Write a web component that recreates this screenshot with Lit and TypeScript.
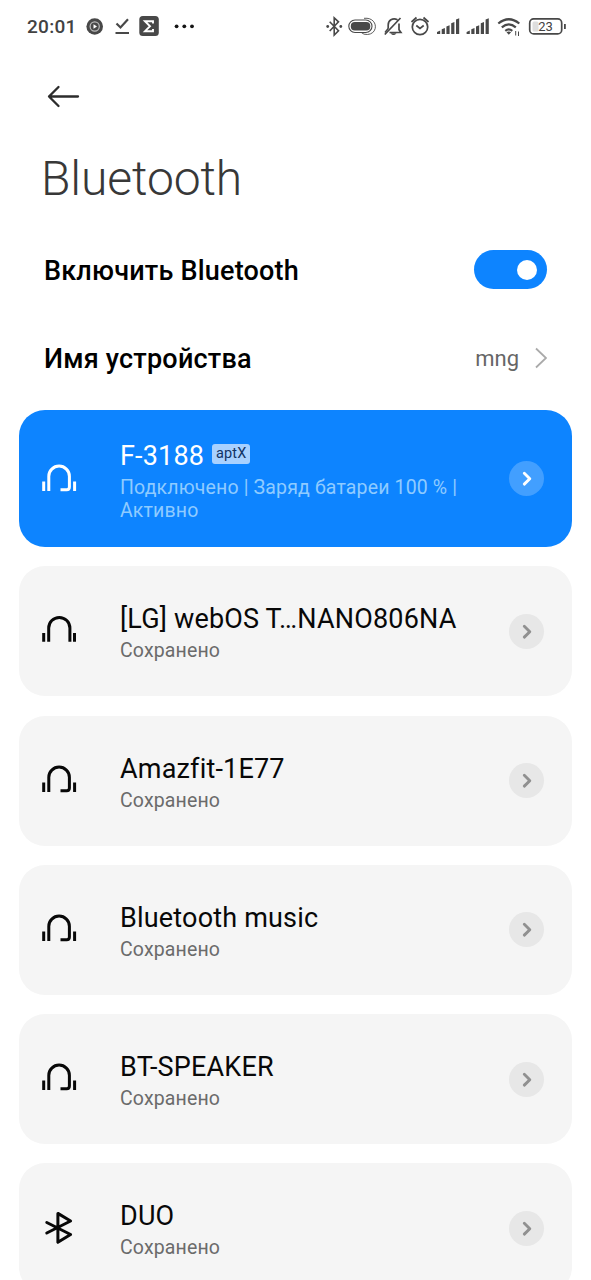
import { LitElement, html, css, svg } from 'lit';
import { customElement, property } from 'lit/decorators.js';
import { classMap } from 'lit/directives/class-map.js';

type Kind = 'headset' | 'headphones' | 'bluetooth';
interface Device { name: string; status: string; kind: Kind; codec?: string; active?: boolean; }

const devices: Device[] = [
  { name: 'F-3188', status: 'Подключено | Заряд батареи 100 % | Активно', kind: 'headset', codec: 'aptX', active: true },
  { name: '[LG] webOS T…NANO806NA', status: 'Сохранено', kind: 'headphones' },
  { name: 'Amazfit-1E77', status: 'Сохранено', kind: 'headset' },
  { name: 'Bluetooth music', status: 'Сохранено', kind: 'headset' },
  { name: 'BT-SPEAKER', status: 'Сохранено', kind: 'headset' },
  { name: 'DUO', status: 'Сохранено', kind: 'bluetooth' },
];

const glyphs = {
  headset: svg`<path d="M1.700 15.500v9.500M32.600 15.500v9.500M6.800 25V10.200a10.300 10.100 0 0 1 20.600 0V21q0 2.700-2.700 2.700H18.500"/>`,
  headphones: svg`<path d="M1.700 16v8.700M32.500 16v8.700M6.700 24.700V11a10.600 10.600 0 0 1 21.200 0V24.700"/>`,
  bluetooth: svg`<path stroke-linejoin="round" stroke-linecap="round" d="M4.800 8.500L28.600 20.500L15.900 28.300V-.6L28.600 7L4.800 19"/>`,
};

@customElement('status-bar')
class StatusBar extends LitElement {
  static styles = css`
    :host { display: flex; height: 53px; box-sizing: border-box; padding-left: 27px; align-items: center; color: #424242; }
    .time { font: 500 19px/24px Roboto, sans-serif; letter-spacing: .3px; width: 58px; padding-top: 1px; }
    svg { display: block; fill: none; stroke: #484848; overflow: visible; }
    .fill { fill: #484848; stroke: none; }
    .num { font: 400 13px Roboto, sans-serif; fill: #424242; stroke: none; }
    .dots { fill: #151515; stroke: none; }
  `;
  render() {
    const bars = (x: number) => svg`<path class="fill" d="M${x} 34v-2l3.200-1.500V34zM${x + 4.700} 34v-4.700l3.200-1.200V34zM${x + 9.400} 34v-7.500l3.200-1.200V34zM${x + 14.200} 34V23.300l3.200-1.300V34zM${x + 19} 34V19.500l3.200-1.300V34z"/>`;
    return html`
      <span class="time">20:01</span>
      <svg width="506" height="53" viewBox="85 0 506 53">
        <circle class="fill" cx="94.700" cy="26.500" r="8.300"/>
        <circle cx="94.700" cy="26.500" r="4.600" stroke="#bbb" stroke-width="1.200"/>
        <path d="M93.500 24.300v4.400l3.500-2.200z" fill="#fff" stroke="none"/>
        <path d="M116.500 23.500l4 4L128 19.300M115.500 33h13.500" stroke-width="2.200"/>
        <rect class="fill" x="139.300" y="16" width="19.500" height="20" rx="3.500"/>
        <path d="M153 23.500V21.300H145l5 4.900-5 5H153V29" stroke="#fff" stroke-width="1.900"/>
        <g class="dots"><circle cx="176.600" cy="26.300" r="1.900"/><circle cx="184.300" cy="26.300" r="1.900"/><circle cx="192" cy="26.300" r="1.900"/></g>
        <path d="M329.700 21.700l8.800 9-4.300 4.300V17.800l4.300 4-8.800 9.200" stroke-width="1.600"/>
        <circle class="fill" cx="327.700" cy="26.500" r="1.400"/><circle class="fill" cx="340.800" cy="26.500" r="1.400"/>
        <rect x="348.800" y="20" width="23.200" height="12.500" rx="6.200" stroke-width="1.100"/>
        <rect class="fill" x="350.800" y="22" width="19.500" height="8.500" rx="4"/>
        <path d="M364 18.300c14-1.500 15 15.500 3.500 16.200q-4 .2-6-1.800" stroke-width=".9"/>
        <path d="M397.500 19.700C392.500 17.500 388.200 20.500 388.200 25v3.800M399 23.500v6.300l1.900 2.700H389.500M384.800 34.500L400.500 18" stroke-width="1.700"/>
        <path d="M385 32.500l3.200-4" stroke-width="1.500"/><path class="fill" d="M390.500 33.200h6q-3 3.800-6 0z"/>
        <circle cx="420" cy="27" r="7.700" stroke-width="1.700"/><path d="M416.300 25.500l3.700 3 3.700-3M411.500 22l5-4.500M428.500 22l-5-4.500" stroke-width="1.700"/>
        ${bars(437)}${bars(466.600)}
        <path d="M498.300 23.500q10.500-8.500 21 0M501.800 27.300q7-5.800 14 0M505.300 30.800q3.500-2.700 7 0" stroke-width="2.200"/>
        <path class="fill" d="M506.500 32.300l2.300 2.400 2.300-2.400q-2.300-1.700-4.600 0"/><path d="M515.700 31v4.500M518.500 31.500v4.500" stroke-width="1"/>
        <rect x="529.700" y="18.900" width="32" height="15" rx="4" stroke-width="1.700"/>
        <rect x="532.500" y="21.500" width="6" height="10" rx="1.500" fill="#dedede" stroke="none"/>
        <path class="fill" d="M564 24h1.800v5H564z"/><text class="num" x="538.300" y="31.200">23</text>
      </svg>`;
  }
}

@customElement('device-card')
class DeviceCard extends LitElement {
  @property({ attribute: false }) device!: Device;
  static styles = css`
    :host { display: block; }
    .card { display: flex; align-items: center; box-sizing: border-box; height: 130px; padding: 0 28px 0 22px; border-radius: 26px; background: #f5f5f5; color: #080808; }
    .kind { flex: none; width: 36px; height: 28px; overflow: visible; fill: none; stroke: currentColor; stroke-width: 3; margin: 0 42px 0 1px; }
    .info { flex: 1; padding-top: 2px; white-space: nowrap; }
    .heading { display: flex; align-items: center; font-size: 27px; line-height: 34px; letter-spacing: .18px; }
    .status { font-size: 19.500px; line-height: 23px; color: #6b6b6b; letter-spacing: .15px; margin-top: 3px; }
    .codec { margin: -3px 0 0 8px; width: 38px; height: 20px; border-radius: 3px; background: #a8d1ff; color: #123465; font-size: 14.500px; line-height: 20px; text-align: center; }
    .go { flex: none; width: 35px; height: 35px; border-radius: 50%; background: #e7e7e7; color: #909090; }
    .go svg { display: block; fill: none; stroke: currentColor; stroke-width: 2.900; stroke-linecap: round; stroke-linejoin: round; }
    .active { height: 137px; background: #0d84ff; color: #fff; }
    .active .info { white-space: normal; padding-top: 3px; }
    .active .kind { transform: translateY(1px); }
    .active .status { color: #8fcbff; }
    .active .go { background: #429fff; color: #fff; }
  `;
  render() {
    const d = this.device;
    return html`<div class=${classMap({ card: true, active: !!d.active })}>
      <svg class="kind" viewBox="0 0 36 28">${glyphs[d.kind]}</svg>
      <div class="info">
        <div class="heading"><span>${d.name}</span>${d.codec ? html`<span class="codec">${d.codec}</span>` : ''}</div>
        <div class="status">${d.status}</div>
      </div>
      <div class="go"><svg width="35" height="35"><path d="M15.300 12.300l5.500 5.400-5.500 5.400"/></svg></div>
    </div>`;
  }
}

@customElement('app-root')
class AppRoot extends LitElement {
  static styles = css`
    :host { display: block; height: 1280px; overflow: hidden; background: #fff; font-family: Roboto, sans-serif; color: #000; }
    .back { display: block; margin: 32px 0 0 47px; fill: none; stroke: #2c2c2c; stroke-width: 2.300; stroke-linecap: round; stroke-linejoin: round; }
    h1 { margin: 42px 0 0 41px; font-weight: 300; font-size: 48px; line-height: 56px; letter-spacing: -.1px; color: #383838; }
    .row { display: flex; align-items: center; justify-content: space-between; margin: 0 44px; height: 88px; font-size: 27px; font-weight: 500; letter-spacing: .2px; }
    .first { margin-top: 18.500px; }
    .label { padding-top: 3px; }
    .toggle { display: flex; justify-content: flex-end; align-items: center; width: 73px; height: 39px; box-sizing: border-box; padding-right: 10px; border-radius: 20px; background: #0d84ff; }
    .knob { width: 20px; height: 20px; border-radius: 50%; background: #fff; }
    .value { display: flex; align-items: center; gap: 16px; font-size: 22px; font-weight: 400; letter-spacing: 0; color: #666; }
    .value span { padding-top: 2px; }
    .value svg { fill: none; stroke: #aaa; stroke-width: 1.800; }
    .list { display: flex; flex-direction: column; gap: 19.300px; margin: 8.500px 19px 0; }
  `;
  render() {
    return html`
      <status-bar></status-bar>
      <svg class="back" width="34" height="24"><path d="M31 11.500H2M11.500 2L2 11.500l9.500 9.500"/></svg>
      <h1>Bluetooth</h1>
      <div class="row first"><span class="label">Включить Bluetooth</span><div class="toggle"><div class="knob"></div></div></div>
      <div class="row"><span class="label">Имя устройства</span><div class="value"><span>mng</span><svg width="12" height="22"><path d="M1 1.500l10 9.500L1 20.500"/></svg></div></div>
      <div class="list">${devices.map(d => html`<device-card .device=${d}></device-card>`)}</div>`;
  }
}
